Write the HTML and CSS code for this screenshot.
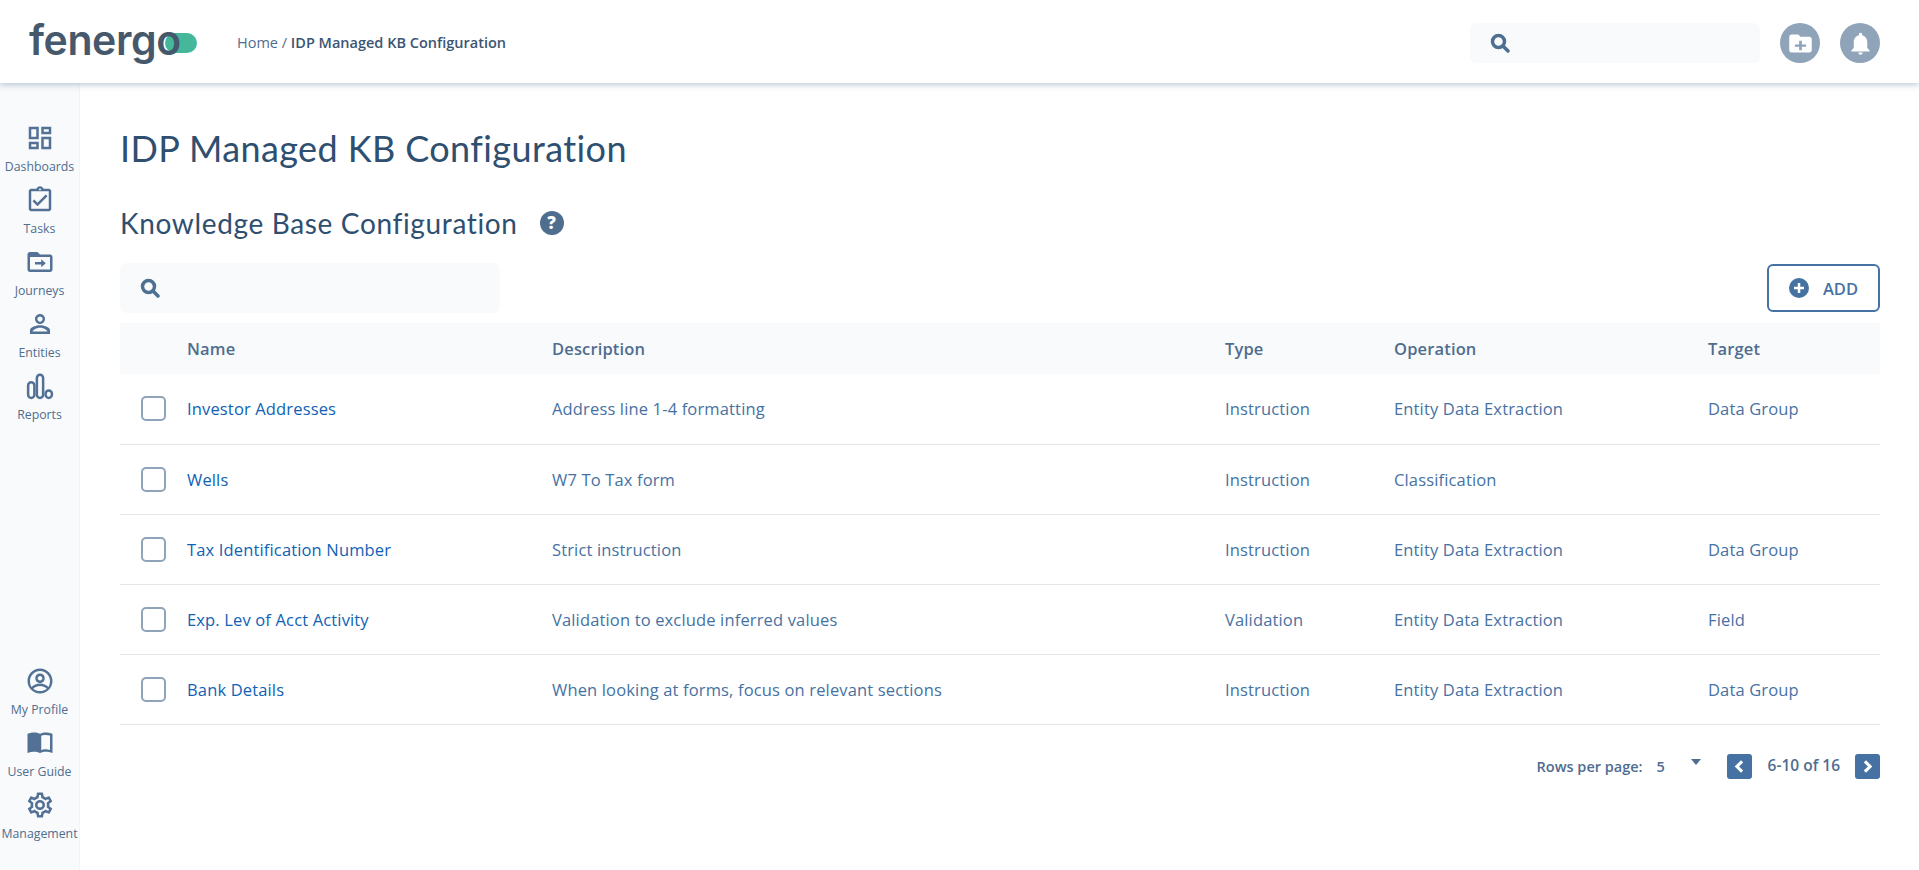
FILE: index.html
```html
<!DOCTYPE html>
<html lang="en">
<head>
<meta charset="utf-8">
<title>IDP Managed KB Configuration</title>
<link rel="stylesheet" href="styles.css">
</head>
<body>
<header class="topbar">
  <div class="logo"><span class="logo-pill"></span><span class="logo-text">fenergo</span></div>
  <nav class="crumbs">Home / <strong>IDP Managed KB Configuration</strong></nav>
  <div class="top-actions">
    <div class="search search-top">
      <svg class="search-icon" viewBox="0 0 20 20"><circle cx="8.5" cy="8.5" r="6" /><path d="M13 13l5 5" /></svg>
    </div>
    <button class="round-btn" type="button"><svg viewBox="0 0 24 24"><path d="M20 6h-8l-2-2H4c-1.1 0-2 .9-2 2v12c0 1.1.9 2 2 2h16c1.1 0 2-.9 2-2V8c0-1.1-.9-2-2-2zm-3 8.800h-3.800v3.200h-2.400v-3.200H7v-2h3.800V9.500h2.400v3.300H17v2z" /></svg></button>
    <button class="round-btn" type="button"><svg viewBox="0 0 24 24"><path d="M12 22c1.1 0 2-.9 2-2h-4c0 1.1.9 2 2 2zm6-6v-5c0-3.07-1.63-5.64-4.5-6.32V4c0-.83-.67-1.5-1.5-1.5s-1.5.67-1.5 1.5v.68C7.64 5.36 6 7.92 6 11v5l-2 2v1h16v-1l-2-2z"/></svg></button>
  </div>
</header>
<div class="layout">
  <aside class="sidebar">
    <ul class="nav">
      <li class="nav-item"><svg class="nav-icon" viewBox="0 0 24 24"><path d="M19 5v2h-4V5h4M9 5v6H5V5h4m10 8v6h-4v-6h4M9 17v2H5v-2h4M21 3h-8v6h8V3zM11 3H3v10h8V3zm10 8h-8v10h8V11zm-10 4H3v6h8v-6z"/></svg><span>Dashboards</span></li>
      <li class="nav-item"><svg class="nav-icon" viewBox="0 0 24 24"><path d="M18 9l-1.41-1.42L10 14.17l-2.59-2.58L6 13l4 4zm1-6h-4.18C14.4 1.84 13.3 1 12 1c-1.3 0-2.4.84-2.82 2H5c-1.1 0-2 .9-2 2v14c0 1.1.9 2 2 2h14c1.1 0 2-.9 2-2V5c0-1.1-.9-2-2-2zm-7-.25c.41 0 .75.34.75.75s-.34.75-.75.75-.75-.34-.75-.75.34-.75.75-.75zM19 19H5V5h14v14z"/></svg><span>Tasks</span></li>
      <li class="nav-item"><svg class="nav-icon" viewBox="0 0 24 24"><path d="M20 6h-8l-2-2H4c-1.1 0-2 .9-2 2v12c0 1.1.9 2 2 2h16c1.1 0 2-.9 2-2V8c0-1.1-.9-2-2-2zm0 12H4V8h16v10zM8 12h5V9.800l3.600 3.200-3.600 3.200V14H8v-2z"/></svg><span>Journeys</span></li>
      <li class="nav-item"><svg class="nav-icon" viewBox="0 0 24 24"><path d="M12 5.900c1.160 0 2.100.94 2.100 2.100s-.94 2.100-2.100 2.100S9.900 9.160 9.900 8s.94-2.100 2.100-2.100M12 4C9.790 4 8 5.790 8 8s1.790 4 4 4 4-1.790 4-4-1.790-4-4-4zm0 9c-2.670 0-8 1.340-8 4v3h16v-3c0-2.660-5.330-4-8-4zM6 18c.2-1 3-3 6-3s5.800 2 6 3H6z"/></svg><span>Entities</span></li>
      <li class="nav-item"><svg class="nav-icon nav-icon-line" viewBox="0 0 24 24"><rect x="2.500" y="9" width="5" height="12.500" rx="2.500"/><rect x="9.500" y="3" width="5" height="18.500" rx="2.500"/><rect x="16.500" y="15.500" width="5" height="6" rx="2.500"/></svg><span>Reports</span></li>
    </ul>
    <ul class="nav">
      <li class="nav-item"><svg class="nav-icon" viewBox="0 0 24 24"><path d="M12 2C6.480 2 2 6.480 2 12s4.480 10 10 10 10-4.480 10-10S17.520 2 12 2zm0 18c-2 0-3.900-.7-5.400-1.900C8 16.800 10 16 12 16s4 .8 5.400 2.100C15.900 19.300 14 20 12 20zm6.800-3.300C17 15 14.500 14 12 14s-5 1-6.800 2.700C4.500 15.500 4 13.800 4 12c0-4.400 3.600-8 8-8s8 3.600 8 8c0 1.800-.5 3.500-1.200 4.700zM12 6c-2.200 0-3.800 1.600-3.800 3.800S9.800 13.600 12 13.600s3.800-1.600 3.800-3.800S14.200 6 12 6zm0 5.600c-1 0-1.800-.8-1.800-1.800S11 8 12 8s1.800.8 1.800 1.800-.8 1.800-1.800 1.800z"/></svg><span>My Profile</span></li>
      <li class="nav-item"><svg class="nav-icon" viewBox="0 0 24 24"><path d="M22 4.500c-1.800-.8-4-1-5.500-1-2 0-3.500.4-4.500 1.200-1-.8-2.500-1.200-4.500-1.200-1.500 0-3.700.2-5.500 1V20c1.800-.7 3.800-1 5.500-1 2 0 3.500.4 4.500 1.200 1-.8 2.500-1.200 4.500-1.200 1.700 0 3.700.3 5.500 1V4.500zm-2 13c-1.100-.3-2.300-.5-3.500-.5-1.600 0-3.100.4-3.500.8V6.200c.5-.4 2-.7 3.500-.7 1.200 0 2.400.1 3.500.5v11.500z"/></svg><span>User Guide</span></li>
      <li class="nav-item"><svg class="nav-icon" viewBox="0 0 24 24"><path d="M19.430 12.980c.04-.32.07-.64.07-.98 0-.34-.03-.66-.07-.98l2.110-1.650c.19-.15.24-.42.12-.64l-2-3.460c-.09-.16-.26-.25-.44-.25-.06 0-.12.01-.17.03l-2.490 1c-.52-.4-1.080-.73-1.690-.98l-.38-2.650C14.460 2.180 14.250 2 14 2h-4c-.25 0-.46.18-.49.42l-.38 2.650c-.61.25-1.170.59-1.690.98l-2.490-1c-.06-.02-.12-.03-.18-.03-.17 0-.34.09-.43.25l-2 3.460c-.13.22-.07.49.12.64l2.110 1.650c-.04.32-.07.65-.07.98 0 .33.03.66.07.98l-2.110 1.650c-.19.15-.24.42-.12.64l2 3.460c.09.16.26.25.44.25.06 0 .12-.01.17-.03l2.490-1c.52.4 1.080.73 1.690.98l.38 2.650c.03.24.24.42.49.42h4c.25 0 .46-.18.49-.42l.38-2.650c.61-.25 1.170-.59 1.690-.98l2.490 1c.06.02.12.03.18.03.17 0 .34-.09.43-.25l2-3.460c.12-.22.07-.49-.12-.64l-2.110-1.650zm-1.980-1.710c.04.31.05.52.05.73 0 .21-.02.43-.05.73l-.14 1.130.89.7 1.080.84-.7 1.210-1.270-.51-1.040-.42-.9.68c-.43.32-.84.56-1.250.73l-1.060.43-.16 1.130-.2 1.350h-1.400l-.19-1.350-.16-1.130-1.060-.43c-.43-.18-.83-.41-1.230-.71l-.91-.7-1.060.43-1.270.51-.7-1.210 1.080-.84.89-.7-.14-1.130c-.03-.31-.05-.54-.05-.74s.02-.43.05-.73l.14-1.130-.89-.7-1.080-.84.7-1.210 1.270.51 1.040.42.9-.68c.43-.32.84-.56 1.250-.73l1.060-.43.16-1.130.2-1.350h1.390l.19 1.350.16 1.130 1.060.43c.43.18.83.41 1.230.71l.91.7 1.060-.43 1.270-.51.7 1.210-1.070.85-.89.7.14 1.130zM12 8c-2.210 0-4 1.790-4 4s1.790 4 4 4 4-1.790 4-4-1.790-4-4-4zm0 6c-1.100 0-2-.9-2-2s.9-2 2-2 2 .9 2 2-.9 2-2 2z"/></svg><span>Management</span></li>
    </ul>
  </aside>
  <main class="content">
    <h1 class="page-title">IDP Managed KB Configuration</h1>
    <div class="section-head">
      <h2 class="section-title">Knowledge Base Configuration</h2>
      <span class="help">?</span>
    </div>
    <div class="toolbar">
      <div class="search search-table">
        <svg class="search-icon" viewBox="0 0 20 20"><circle cx="8.500" cy="8.500" r="6" /><path d="M13 13l5 5" /></svg>
      </div>
      <button class="add-btn" type="button"><svg viewBox="0 0 20 20"><circle cx="10" cy="10" r="10"/><path d="M10 5v10M5 10h10"/></svg>ADD</button>
    </div>
    <table class="grid">
      <colgroup>
        <col class="c-check"><col class="c-name"><col class="c-desc"><col class="c-type"><col class="c-op"><col class="c-target">
      </colgroup>
      <thead>
        <tr><th></th><th>Name</th><th>Description</th><th>Type</th><th>Operation</th><th>Target</th></tr>
      </thead>
      <tbody>
        <tr><td><span class="check"></span></td><td class="name">Investor Addresses</td><td>Address line 1-4 formatting</td><td>Instruction</td><td>Entity Data Extraction</td><td>Data Group</td></tr>
        <tr><td><span class="check"></span></td><td class="name">Wells</td><td>W7 To Tax form</td><td>Instruction</td><td>Classification</td><td></td></tr>
        <tr><td><span class="check"></span></td><td class="name">Tax Identification Number</td><td>Strict instruction</td><td>Instruction</td><td>Entity Data Extraction</td><td>Data Group</td></tr>
        <tr><td><span class="check"></span></td><td class="name">Exp. Lev of Acct Activity</td><td>Validation to exclude inferred values</td><td>Validation</td><td>Entity Data Extraction</td><td>Field</td></tr>
        <tr><td><span class="check"></span></td><td class="name">Bank Details</td><td>When looking at forms, focus on relevant sections</td><td>Instruction</td><td>Entity Data Extraction</td><td>Data Group</td></tr>
      </tbody>
    </table>
    <div class="pager">
      <span class="rows-label">Rows per page:</span>
      <span class="rows-value">5</span>
      <span class="caret"></span>
      <button class="page-btn" type="button"><svg viewBox="0 0 24 24"><path d="M14.500 7l-5 5 5 5"/></svg></button>
      <span class="range">6-10 of 16</span>
      <button class="page-btn" type="button"><svg viewBox="0 0 24 24"><path d="M9.500 7l5 5-5 5"/></svg></button>
    </div>
  </main>
</div>
</body>
</html>
```
FILE: styles.css
```css
* { box-sizing: border-box; }
html, body { margin: 0; height: 100%; overflow: hidden; }
body {
  display: flex;
  flex-direction: column;
  background: #fff;
  font-family: "Open Sans", "Lato", sans-serif;
  color: #4672a3;
}
.topbar {
  position: relative;
  z-index: 2;
  flex: 0 0 83px;
  display: flex;
  align-items: center;
  background: #fff;
  box-shadow: 0 2px 6px rgba(74, 109, 140, .35);
  padding: 3px 39px 0 29px;
}
.logo { position: relative; width: 168px; height: 60px; margin-right: 40px; }
.logo-text {
  position: relative;
  display: block;
  font: 600 41px/54px "Inter", sans-serif;
  letter-spacing: -.4px;
  color: #46586b;
}
.logo-pill {
  position: absolute;
  right: 0;
  top: 20px;
  width: 32px;
  height: 20px;
  border-radius: 10px;
  background: #45b89b;
}
.crumbs { font-size: 14.500px; color: #4f6d8f; margin-bottom: 2px; }
.crumbs strong { font-weight: 600; color: #3b5573; }
.top-actions { margin-left: auto; display: flex; align-items: center; gap: 20px; }
.search { background: #f8fafc; border-radius: 6px; display: flex; align-items: center; }
.search-top { width: 290px; height: 40px; padding-left: 20px; }
.search-table { width: 380px; height: 50px; padding-left: 20px; }
.search-icon { width: 20px; height: 20px; fill: none; stroke: #4d6f92; stroke-width: 3.500; stroke-linecap: round; }
.round-btn {
  width: 40px;
  height: 40px;
  padding: 0;
  border: 0;
  border-radius: 50%;
  background: #8fa3b9;
  display: flex;
  align-items: center;
  justify-content: center;
}
.round-btn svg { width: 27px; height: 27px; fill: #fff; }
.layout { flex: 1; display: flex; min-height: 0; }
.sidebar {
  flex: 0 0 80px;
  display: flex;
  flex-direction: column;
  justify-content: space-between;
  background: #f8fafc;
  border-right: 1px solid #f1f4f8;
  padding: 40px 0 18px;
}
.nav { list-style: none; margin: 0; padding: 0; }
.nav-item {
  height: 62px;
  display: flex;
  flex-direction: column;
  align-items: center;
  font-size: 12.300px;
  line-height: 16px;
  color: #4f6d8f;
  white-space: nowrap;
}
.nav-icon { width: 30px; height: 30px; fill: #527195; margin-bottom: 6px; }
.nav-icon-line rect { fill: none; stroke: #527195; stroke-width: 2; }
.content { flex: 1; min-width: 0; padding: 40px 39px 0 40px; }
.page-title { margin: 0; font: 400 36px/50px "Lato", sans-serif; color: #2f4f70; letter-spacing: .4px; }
.section-head { display: flex; align-items: center; gap: 22px; margin-top: 25px; height: 50px; }
.section-title { margin: 0; font: 400 28px/50px "Lato", sans-serif; color: #2f4f70; letter-spacing: .65px; }
.help {
  width: 24px;
  height: 24px;
  border-radius: 50%;
  background: #4f6d8f;
  color: #fff;
  font-size: 17px;
  font-weight: 800;
  line-height: 24px;
  text-align: center;
}
.toolbar { display: flex; justify-content: space-between; align-items: center; margin-top: 15px; }
.add-btn {
  width: 113px;
  height: 48px;
  border: 2px solid #4672a3;
  border-radius: 6px;
  background: #fff;
  color: #4672a3;
  font: 600 16.500px "Open Sans", sans-serif;
  display: flex;
  align-items: center;
  justify-content: center;
  gap: 14px;
}
.add-btn svg { width: 20px; height: 20px; fill: #4672a3; }
.add-btn path { stroke: #fff; stroke-width: 2.500; }
.grid { width: 100%; table-layout: fixed; border-collapse: collapse; margin-top: 10px; font-size: 16.500px; letter-spacing: .15px; }
.c-check { width: 67px; }
.c-name { width: 365px; }
.c-desc { width: 673px; }
.c-type { width: 169px; }
.c-op { width: 314px; }
.grid th {
  height: 51px;
  padding: 0;
  background: #f8fafc;
  text-align: left;
  font-weight: 600;
  color: #4f6d8f;
}
.grid td { height: 70px; padding: 0; border-bottom: 1px solid #e3e6ea; color: #4672a3; }
.grid td.name { color: #0f62b5; }
.check {
  display: block;
  width: 25px;
  height: 25px;
  margin-left: 21px;
  border: 2.500px solid #8fa3b9;
  border-radius: 5px;
  background: #fff;
}
.pager {
  display: flex;
  align-items: center;
  justify-content: flex-end;
  margin-top: 29px;
  font-size: 14.500px;
  font-weight: 600;
  color: #4f6d8f;
}
.rows-value { margin-left: 14px; width: 34px; }
.caret {
  width: 0;
  height: 0;
  border-left: 5px solid transparent;
  border-right: 5px solid transparent;
  border-top: 6px solid #4f6d8f;
  margin: 0 26px 10px 0;
}
.page-btn { width: 25px; height: 25px; padding: 0; border: 0; border-radius: 3px; background: #4672a3; display: flex; }
.page-btn svg { width: 25px; height: 25px; fill: none; stroke: #fff; stroke-width: 3; }
.range { margin: 0 15px 4px 16px; font-size: 15.500px; }
```
